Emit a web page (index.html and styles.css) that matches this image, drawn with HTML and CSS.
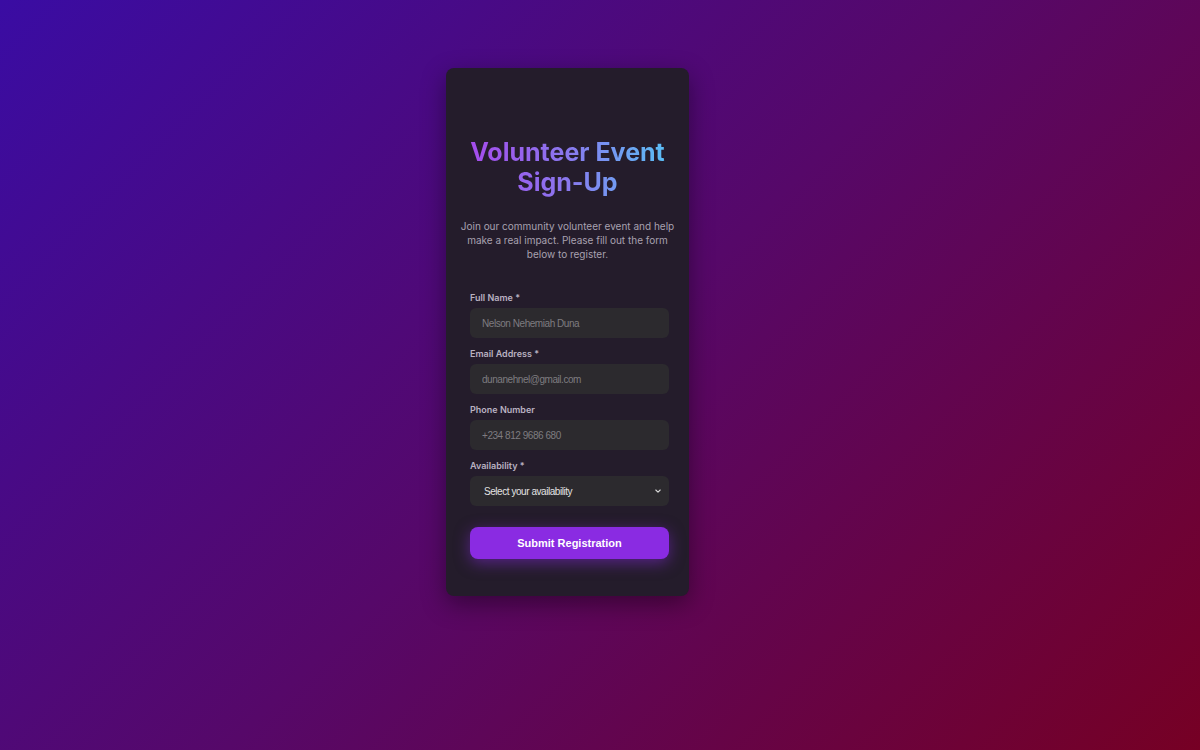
FILE: index.html
```html
<!DOCTYPE html>
<html lang="en">
<head>
<meta charset="utf-8">
<title>Volunteer Event Sign-Up</title>
<link rel="stylesheet" href="styles.css">
</head>
<body>
<main class="page">
  <section class="card">
    <div class="card-top"></div>
    <h1 class="title">Volunteer Event Sign-Up</h1>
    <p class="intro">Join our community volunteer event and help make a real impact. Please fill out the form below to register.</p>
    <form class="form">
      <div class="field">
        <label class="label" for="name">Full Name *</label>
        <input class="input" id="name" type="text" placeholder="Nelson Nehemiah Duna">
      </div>
      <div class="field">
        <label class="label" for="email">Email Address *</label>
        <input class="input" id="email" type="email" placeholder="dunanehnel@gmail.com">
      </div>
      <div class="field">
        <label class="label" for="phone">Phone Number</label>
        <input class="input" id="phone" type="tel" placeholder="+234 812 9686 680">
      </div>
      <div class="field">
        <label class="label" for="avail">Availability *</label>
        <div class="select">
          <span class="select-text">Select your availability</span>
          <svg class="chev" width="8" height="8" viewBox="0 0 8 8"><path d="M1.8 3 L4 5.1 L6.2 3" fill="none" stroke="#d8d8d8" stroke-width="1.1" stroke-linecap="round" stroke-linejoin="round"/></svg>
        </div>
      </div>
      <button class="submit" type="button">Submit Registration</button>
    </form>
  </section>
</main>
</body>
</html>
```
FILE: styles.css
```css
* { box-sizing: border-box; }
html, body { margin: 0; height: 100%; }
body {
  background: linear-gradient(135deg, #3a0ca3 0%, #560869 50%, #760024 100%);
  font-family: Inter, "Noto Sans", sans-serif;
  overflow: hidden;
}
.page {
  padding: 68px 0 0 446px;
}
.card {
  width: 243px;
  background: #241c2b;
  border-radius: 8px;
  box-shadow: 0 8px 24px rgba(0, 0, 0, 0.4);
  padding: 0 12px 37px 12px;
}
.card-top { height: 69px; }
.title {
  margin: 0;
  font-size: 25px;
  line-height: 30px;
  font-weight: 700;
  text-align: center;
  background: linear-gradient(90deg, #a846ec 0%, #8a78ee 50%, #55c6f6 100%);
  -webkit-background-clip: text;
  background-clip: text;
  color: transparent;
}
.intro {
  margin: 22px 0 0 0;
  font-size: 10px;
  line-height: 14px;
  color: #a8a1b0;
  text-align: center;
}
.form {
  margin-top: 31px;
  padding: 0 8px 0 12px;
  display: flex;
  flex-direction: column;
}
.field {
  display: flex;
  flex-direction: column;
  margin-bottom: 10px;
}
.label {
  font-size: 9px;
  line-height: 12px;
  font-weight: 600;
  color: #b9b1c1;
  margin-bottom: 4px;
}
.input {
  height: 30px;
  border: none;
  border-radius: 6px;
  background: #2c2a2e;
  padding: 0 12px;
  font-family: "Liberation Sans", Arial, sans-serif;
  font-size: 10px;
  letter-spacing: -0.45px;
  color: #ddd;
  outline: none;
}
.input::placeholder { color: #7e7c80; }
.select {
  height: 30px;
  border-radius: 6px;
  background: #2c2a2e;
  padding: 0 7px 0 14px;
  display: flex;
  align-items: center;
  justify-content: space-between;
}
.select-text {
  font-family: "Liberation Sans", Arial, sans-serif;
  font-size: 10px;
  letter-spacing: -0.45px;
  color: #e2e2e2;
}
.submit {
  margin-top: 11px;
  height: 32px;
  border: none;
  border-radius: 8px;
  background: #8a2be2;
  color: #fff;
  font-family: "Liberation Sans", Arial, sans-serif;
  font-weight: 700;
  font-size: 11px;
  box-shadow: 0 4px 15px rgba(138, 43, 226, 0.5);
}
```
